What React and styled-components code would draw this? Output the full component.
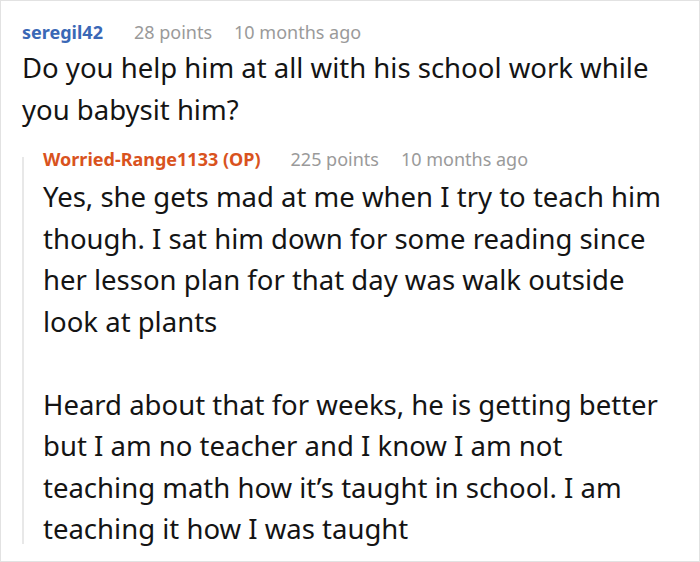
import React from "react";
import styled, { createGlobalStyle } from "styled-components";

const Global = createGlobalStyle`
  html, body { margin: 0; padding: 0; background: #fff; }
  body { font-family: "Noto Sans", "Open Sans", sans-serif; }
  * { box-sizing: border-box; }
`;

const Frame = styled.div`
  width: 700px;
  height: 562px;
  border: 1px solid #e2e2e2;
  padding: 19px 24px 0 21px;
  overflow: hidden;
  background: #fff;
`;

const Meta = styled.div`
  display: flex;
  align-items: baseline;
  font-size: 18px;
  line-height: 24px;
  white-space: nowrap;
`;

const Author = styled.span`
  font-weight: 700;
  color: ${(p) => (p.$op ? "#d9531e" : "#3a68b6")};
`;

const Stat = styled.span`
  color: #9a9a9a;
  margin-left: ${(p) => p.$gap}px;
`;

const Body = styled.div`
  margin-top: ${(p) => p.$top}px;
  font-size: 27.5px;
  line-height: 41.5px;
  color: #141414;
  p { margin: 0; }
  p + p { margin-top: 41.5px; }
`;

const Reply = styled.div`
  position: relative;
  margin-top: 17px;
  padding-left: 21px;
  &::before {
    content: "";
    position: absolute;
    left: 0;
    top: 10px;
    bottom: 6px;
    width: 2px;
    background: #e8e8e8;
  }
`;

function Comment({ author, op, points, time, gaps, top, children }) {
  return (
    <>
      <Meta>
        <Author $op={op}>{author}</Author>
        <Stat $gap={gaps[0]}>{points}</Stat>
        <Stat $gap={gaps[1]}>{time}</Stat>
      </Meta>
      <Body $top={top}>{children}</Body>
    </>
  );
}

export default function App() {
  return (
    <>
      <Global />
      <Frame>
        <Comment author="seregil42" points="28 points" time="10 months ago" gaps={[31, 22]} top={3}>
          <p>Do you help him at all with his school work while you babysit him?</p>
        </Comment>
        <Reply>
          <Comment author="Worried-Range1133 (OP)" op points="225 points" time="10 months ago" gaps={[30, 22]} top={5}>
            <p>Yes, she gets mad at me when I try to teach him though. I sat him down for some reading since her lesson plan for that day was walk outside look at plants</p>
            <p>Heard about that for weeks, he is getting better but I am no teacher and I know I am not teaching math how it’s taught in school. I am teaching it how I was taught</p>
          </Comment>
        </Reply>
      </Frame>
    </>
  );
}
